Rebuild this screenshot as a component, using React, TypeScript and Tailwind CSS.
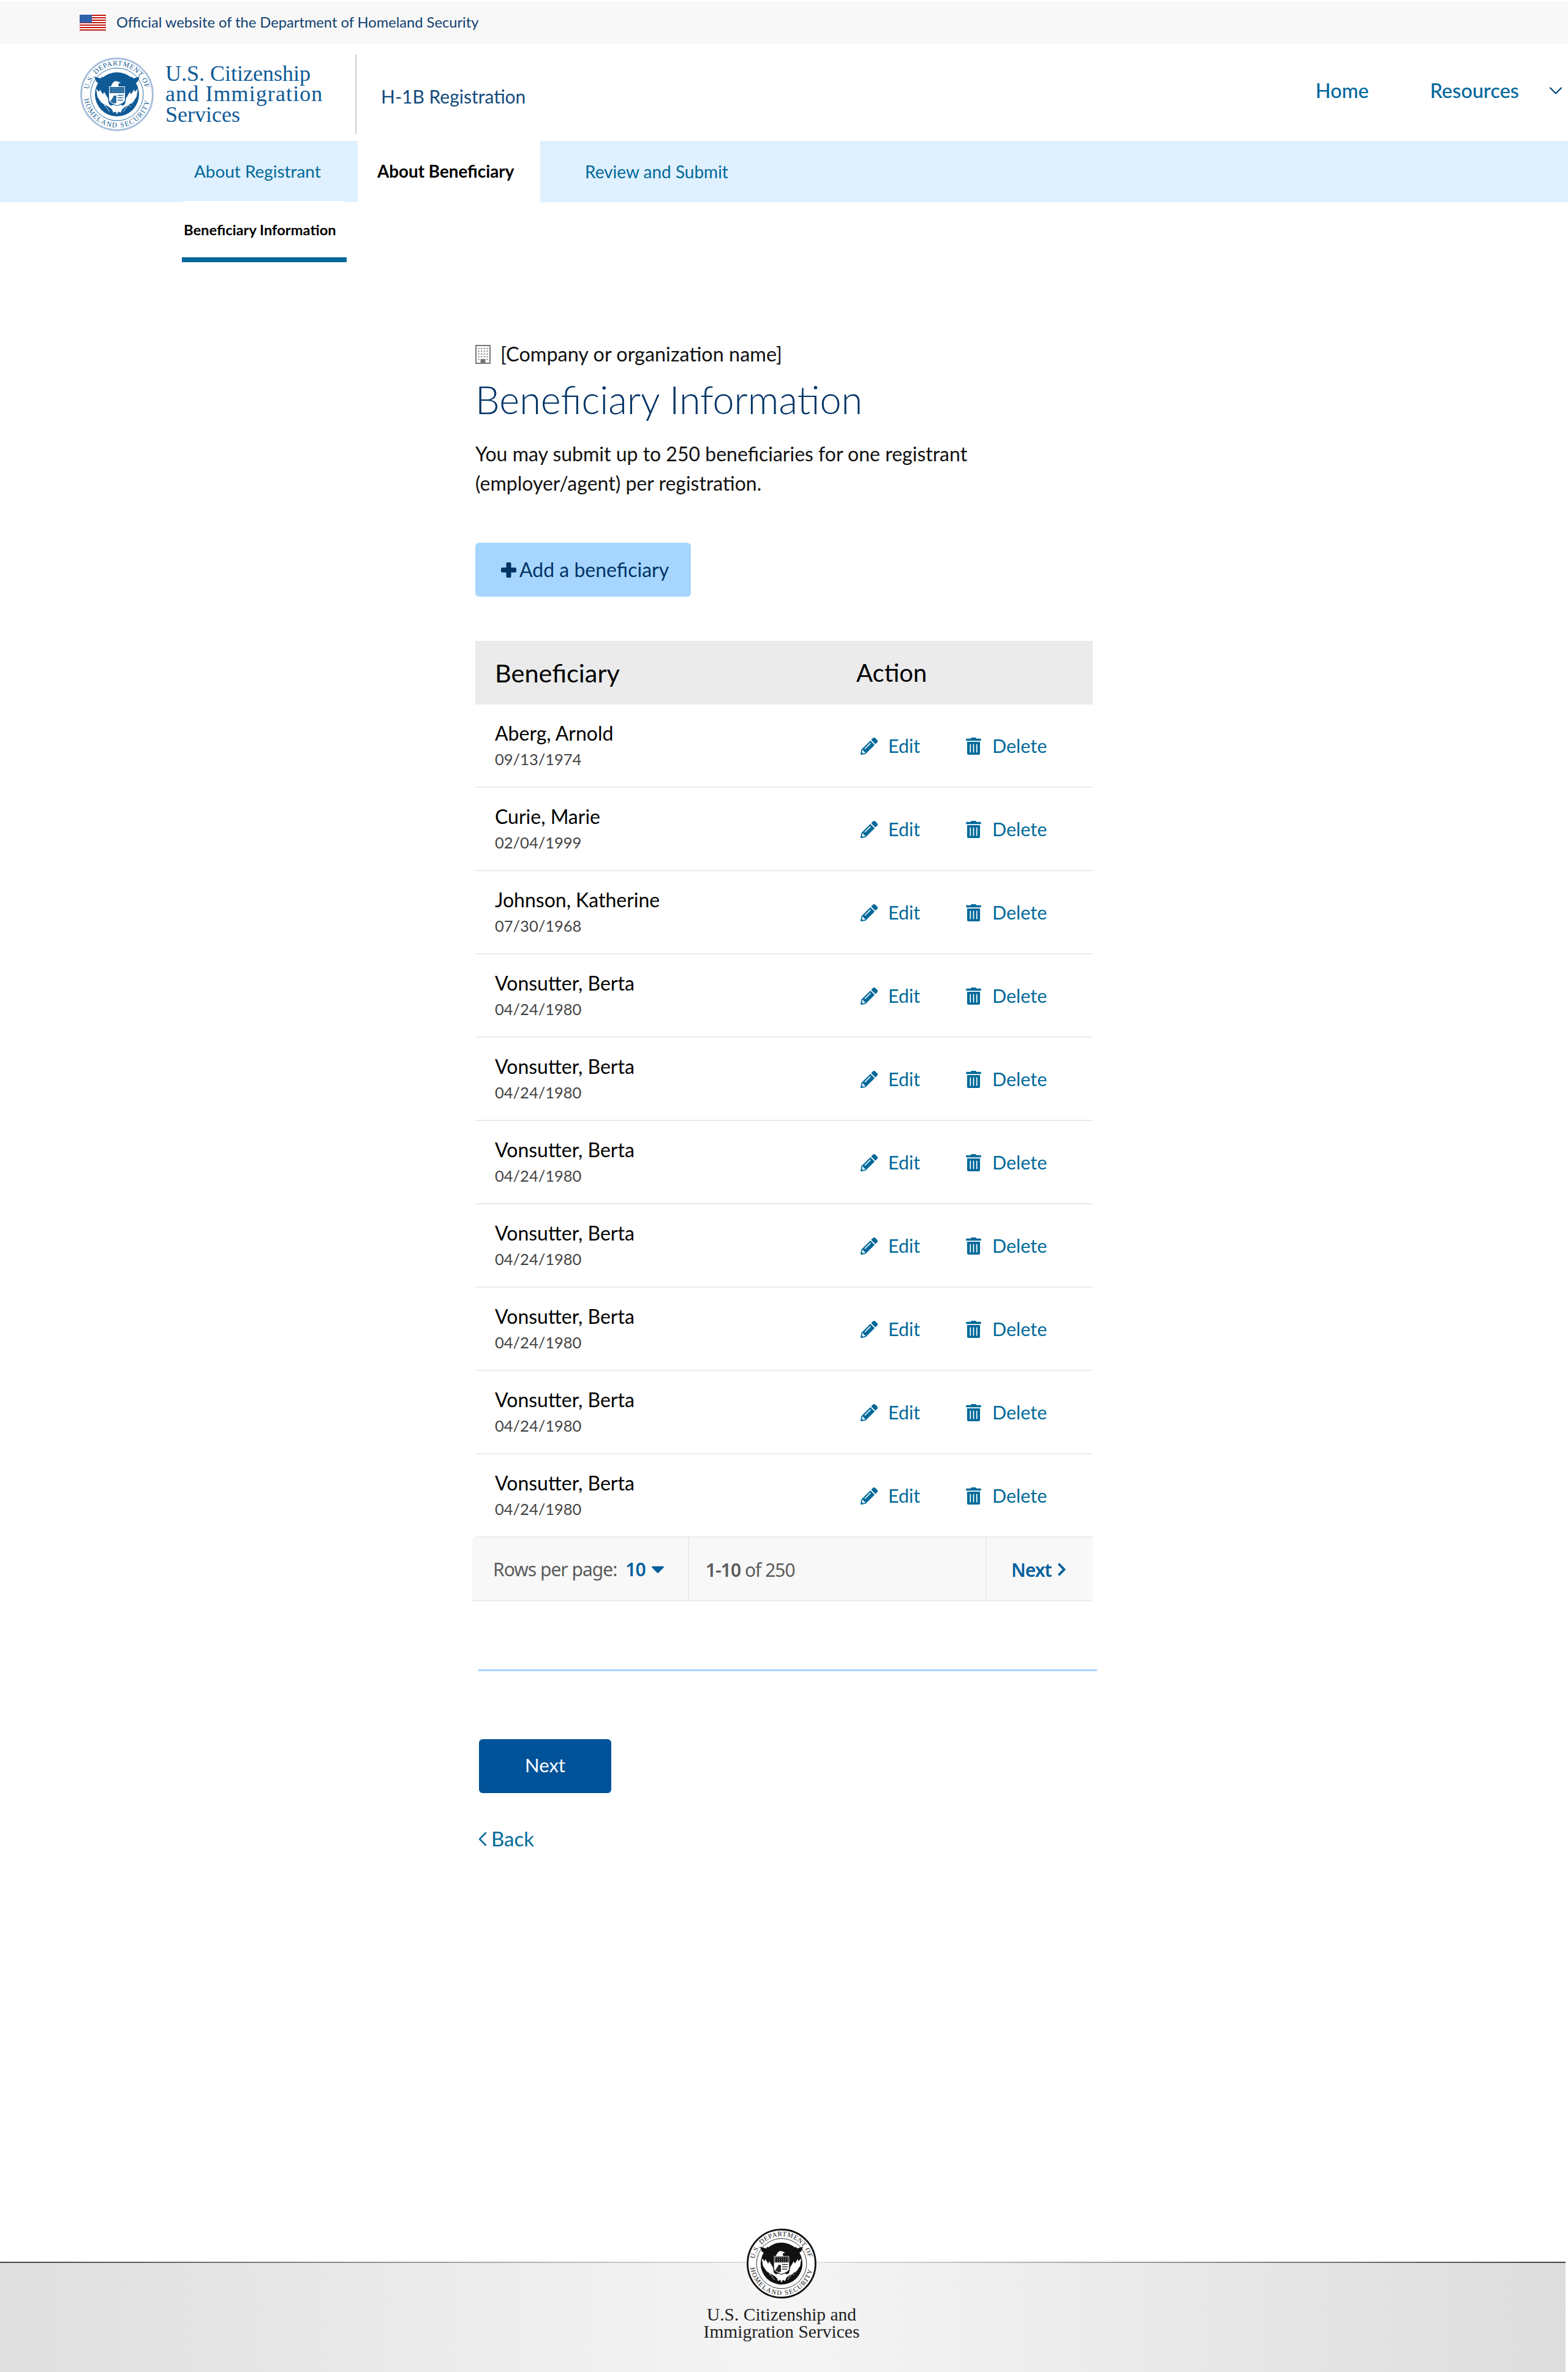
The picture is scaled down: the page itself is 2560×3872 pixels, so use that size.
import React from "react";
import { FaPencilAlt, FaTrashAlt, FaChevronRight, FaCaretDown } from "react-icons/fa";
import { LuChevronDown, LuChevronLeft } from "react-icons/lu";

function Seal({ ring, ink, text, className }: { ring: string; ink: string; text: string; className: string }) {
  const id = ink.replace("#", "s");
  const dots: React.ReactNode[] = [];
  for (let r = 0; r < 3; r++) {
    for (let c = 0; c < 7; c++) {
      dots.push(<circle key={`${r}-${c}`} cx={50 + c * 3.3} cy={50 + r * 3} r={0.7} fill="#fff" />);
    }
  }
  return (
    <svg viewBox="0 0 120 120" className={className}>
      <circle cx="60" cy="60" r="58.4" fill="#fff" stroke={ring} strokeWidth="3" />
      <defs>
        <path id={`${id}t`} d="M13.7 51.8A47 47 0 0 1 106.3 51.8" />
        <path id={`${id}b`} d="M6.5 67.5A54 54 0 0 0 113.5 67.5" />
      </defs>
      <text fontFamily="'Liberation Serif',serif" fontSize="11.5" fill={text}>
        <textPath href={`#${id}t`} textLength="129" lengthAdjust="spacing">U.S. DEPARTMENT OF</textPath>
      </text>
      <text fontFamily="'Liberation Serif',serif" fontSize="11.5" fill={text}>
        <textPath href={`#${id}b`} textLength="151" lengthAdjust="spacing">HOMELAND SECURITY</textPath>
      </text>
      <circle cx="60" cy="60" r="43" fill="#fff" stroke={ink} strokeWidth="0.9" />
      <circle cx="60" cy="60" r="36" fill={ink} />
      <path fill={ink} d="M23 31 L33 34 L36 31 L40 36 L43 44 L47 54 L42 60 L36 52 L30 47 L31 43 L26 39 Z" />
      <path fill={ink} d="M97 31 L87 34 L84 31 L80 36 L77 44 L73 54 L78 60 L84 52 L90 47 L89 43 L94 39 Z" />
      <path fill="#fff" d="M26 51 L31 56 L32 52 L37 60 L39 56 L45 66 L47 76 L54 81 L49 82 L41 77 L34 73 L28 64 Z" />
      <path fill="#fff" d="M94 51 L89 56 L88 52 L83 60 L81 56 L75 66 L73 76 L66 81 L71 82 L79 77 L86 73 L92 64 Z" />
      <path fill="#fff" d="M50 48 C52 42 54 39 58 38.5 C61 38.5 64 40 66 41.5 L62 42.5 L63 48 Z" />
      <path fill="#fff" d="M47 47 H73 V68 C73 74 65 76 60 78 C55 76 47 74 47 68 Z" />
      <rect x="48" y="48" width="24" height="10" fill={ink} />
      {dots}
      <path fill="none" stroke={ink} strokeWidth="1.3" d="M61 62 C64 60 67 63 71 61 M61 66 C64 64 67 67 71 65 M61 70 C64 68 67 71 70 69" />
      <path fill={ink} d="M49 72 L55 62 L59 62 V74 L55 75 Z" opacity="0.9" />
      <path fill="#fff" d="M47 80 L54 77 L60 79 L66 77 L73 80 L68 85 L66 90 L62 88 L60 93 L58 88 L54 90 L52 85 Z" />
      <path fill="none" stroke="#fff" strokeWidth="0.9" d="M34 70 L48 88 M36 66 L34 72 M40 70 L36 75 M43 76 L39 79 M38 69 L43 71 M42 75 L47 77" />
      <path fill="none" stroke="#fff" strokeWidth="0.9" d="M86 68 L70 88 M84 67 L87 72 M81 71 L85 76 M77 76 L82 80 M83 70 L78 68 M78 75 L74 74" />
    </svg>
  );
}

function Flag() {
  return (
    <svg viewBox="0 0 43 26" className="w-[43px] h-[26px] shrink-0">
      <rect width="43" height="26" fill="#fff" />
      {[0, 4, 8, 12, 16, 20, 24].map((y) => (
        <rect key={y} y={y} width="43" height="2" fill="#c5170f" />
      ))}
      <rect width="20" height="13" fill="#2d62ad" />
    </svg>
  );
}

function Building() {
  const cells: React.ReactNode[] = [];
  for (let r = 0; r < 5; r++) {
    for (let c = 0; c < 4; c++) {
      if (r === 4 && (c === 1 || c === 2)) continue;
      cells.push(<rect key={`${r}${c}`} x={4.6 + c * 4.6} y={5 + r * 4.4} width="2" height="2" fill="#888" />);
    }
  }
  return (
    <svg viewBox="0 0 25 31" className="w-[25px] h-[31px] shrink-0">
      <rect x="1" y="1" width="23" height="29" fill="#fbfbfb" stroke="#777" strokeWidth="2" />
      {cells}
      <rect x="8.5" y="23" width="8" height="7" fill="#777" />
    </svg>
  );
}

function Plus() {
  return (
    <svg viewBox="0 0 25 25" className="w-[25px] h-[25px] shrink-0" fill="currentColor">
      <rect x="8.5" y="0" width="8" height="25" rx="2" />
      <rect x="0" y="8.5" width="25" height="8" rx="2" />
    </svg>
  );
}

const rows: [string, string][] = [
  ["Aberg, Arnold", "09/13/1974"],
  ["Curie, Marie", "02/04/1999"],
  ["Johnson, Katherine", "07/30/1968"],
  ["Vonsutter, Berta", "04/24/1980"],
  ["Vonsutter, Berta", "04/24/1980"],
  ["Vonsutter, Berta", "04/24/1980"],
  ["Vonsutter, Berta", "04/24/1980"],
  ["Vonsutter, Berta", "04/24/1980"],
  ["Vonsutter, Berta", "04/24/1980"],
  ["Vonsutter, Berta", "04/24/1980"],
];

export default function App() {
  return (
    <div className="min-h-[3872px] flex flex-col bg-white font-['Lato','Liberation_Sans',sans-serif]">
      <div className="mt-[2px] h-[70px] bg-[#f8f8f8] flex items-center pl-[130px] gap-[17px]">
        <Flag />
        <span className="text-[23.7px] text-[#11406f]">Official website of the Department of Homeland Security</span>
      </div>

      <header className="h-[158px] flex items-center justify-between pr-[2px]">
        <div className="flex items-center pl-[131px] pt-[6px]">
          <Seal ring="#a7bfdd" ink="#0f5a96" text="#0f5a96" className="w-[120px] h-[120px]" />
          <div className="ml-[19px] w-[310px] font-['Liberation_Serif',serif] text-[36px] leading-[33.5px] text-[#0f5a96]">
            <div>U.S. Citizenship</div>
            <div className="tracking-[1.1px]">and Immigration</div>
            <div>Services</div>
          </div>
          <div className="w-[2px] h-[130px] bg-[#cfcfcf]" />
          <div className="ml-[40px] mt-[7px] text-[30px] text-[#114a7c]">H-1B Registration</div>
        </div>
        <nav className="mb-[6px] flex items-center text-[32.5px] font-medium text-[#00679b]">
          <span>Home</span>
          <span className="ml-[100px]">Resources</span>
          <LuChevronDown strokeWidth={1.5} className="ml-[42px] w-[36px] h-[36px] text-[#00487c]" />
        </nav>
      </header>

      <div className="h-[100px] bg-[#dff0ff] flex">
        <div className="w-[584px] pl-[317px] flex items-center text-[27.9px] text-[#00699a]">About Registrant</div>
        <div className="w-[298px] pl-[32px] bg-white flex items-center text-[27.8px] font-bold text-black">About Beneficiary</div>
        <div className="pl-[73px] flex items-center text-[28px] text-[#00699a]">Review and Submit</div>
      </div>

      <div className="pl-[297px]">
        <div className="relative ml-[3px] mt-[-2px] w-[262px] h-[2px] bg-white" />
        <div className="w-[269px] h-[98px] pl-[3px] pt-[2px] border-b-[8px] border-[#00679b] flex items-center text-[23.7px] font-bold text-black">
          Beneficiary Information
        </div>
      </div>

      <main className="ml-[776px] w-[1008px]">
        <div className="mt-[134px] h-[32px] flex items-center gap-[16px] text-[32.4px] text-[#111]">
          <Building />
          <span>[Company or organization name]</span>
        </div>
        <h1 className="mt-[22px] h-[72px] leading-[72px] text-[63px] font-light text-[#003366]">Beneficiary Information</h1>
        <p className="mt-[29px] w-[900px] text-[32px] leading-[48px] text-[#111]">
          You may submit up to 250 beneficiaries for one registrant
          <br />
          (employer/agent) per registration.
        </p>
        <button className="mt-[73px] w-[352px] h-[88px] rounded-[6px] bg-[#a6d6ff] flex items-center pl-[42px] gap-[5px] text-[32px] text-[#003366]">
          <Plus />
          <span>Add a beneficiary</span>
        </button>

        <div className="mt-[72px] h-[104px] bg-[#ebebeb] flex items-center text-black">
          <div className="w-[622px] pl-[32px] text-[41.5px]">Beneficiary</div>
          <div className="text-[40px]">Action</div>
        </div>
        {rows.map(([name, date], i) => (
          <div key={i} className="h-[136px] border-b-[2px] border-[#ebebeb] flex items-center">
            <div className="w-[629px] pl-[32px] pt-[2px]">
              <div className="text-[32px] leading-[40px] text-black">{name}</div>
              <div className="mt-[2px] text-[25.5px] leading-[40px] text-[#444]">{date}</div>
            </div>
            <div className="flex items-center pt-[1px] text-[30.5px] text-[#00699a]">
              <FaPencilAlt className="w-[28px] h-[28px]" />
              <span className="ml-[17px] w-[52px]">Edit</span>
              <FaTrashAlt className="ml-[75px] w-[25px] h-[28px]" />
              <span className="ml-[18px]">Delete</span>
            </div>
          </div>
        ))}

        <div className="ml-[-5px] w-[1013px] h-[104px] bg-[#f8f8f8] border-b-[2px] border-[#ebebeb] flex font-['Noto_Sans',sans-serif] text-[30px] tracking-[-1px] text-[#5c5c5c]">
          <div className="w-[354px] pl-[34px] border-r-[2px] border-[#ebebeb] flex items-center">
            <span>Rows per page:</span>
            <span className="ml-[14px] font-semibold text-[#00609c]">10</span>
            <FaCaretDown className="ml-[3px] w-[34px] h-[34px] text-[#00609c]" />
          </div>
          <div className="w-[486px] pl-[27px] pt-[3px] border-r-[2px] border-[#ebebeb] flex items-center">
            <span><b className="font-semibold">1-10</b> of 250</span>
          </div>
          <div className="pl-[40px] pt-[2px] flex items-center font-semibold text-[#00609c]">
            <span>Next</span>
            <FaChevronRight className="ml-[9px] w-[15px] h-[24px]" />
          </div>
        </div>

        <div className="ml-[5px] mt-[111px] w-[1010px] h-[3px] bg-[#a6d6ff]" />
        <button className="ml-[6px] mt-[111px] w-[216px] h-[88px] pb-[3px] rounded-[6px] bg-[#005399] text-white text-[31px] flex items-center justify-center">
          Next
        </button>
        <div className="ml-[6px] mt-[55px] h-[40px] flex items-center text-[33px] text-[#00699a]">
          <LuChevronLeft className="ml-[-14px] mr-[-6px] w-[40px] h-[40px] shrink-0" strokeWidth={1.5} />
          <span>Back</span>
        </div>
      </main>

      <footer className="relative mt-auto h-[180px] w-[2556px] pr-[4px] pt-[72px] bg-[linear-gradient(to_right,#dfdfdf,#f5f5f5,#dddddd)] text-center font-['Liberation_Serif',serif] text-[29.5px] leading-[28px] text-[#222]">
        <div className="absolute left-0 top-0 w-full h-[2px] bg-[linear-gradient(to_right,#444,#e6e6e6,#444)]" />
        <div className="absolute left-[1219px] top-[-54px]">
          <Seal ring="#111" ink="#111" text="#111" className="w-[114px] h-[114px]" />
        </div>
        U.S. Citizenship and
        <br />
        Immigration Services
      </footer>
    </div>
  );
}
